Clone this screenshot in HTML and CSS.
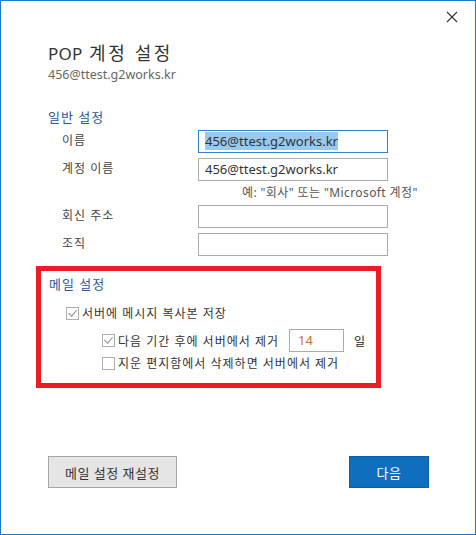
FILE: index.html
```
<!DOCTYPE html>
<html lang="ko">
<head>
    <meta charset="UTF-8">
    <meta name="viewport" content="width=device-width, initial-scale=1.0">
    <title>POP 계정 설정</title>
    <link rel="stylesheet" href="styles.css">
</head>
<body>

    <div class="window">
        <div class="titlebar">
            <span class="close">
                <svg width="12" height="12" viewBox="0 0 12 12"><path d="M1 1L11 11M11 1L1 11" stroke="#333" stroke-width="1.1" fill="none"/></svg>
            </span>
        </div>

        <div class="content">
            <h1>POP <span class="title-ko">계정 설정</span></h1>
            <p class="account">456@ttest.g2works.kr</p>

            <h2>일반 설정</h2>
            <div class="form">
                <div class="row">
                    <label>이름</label>
                    <div class="field focused"><span class="selected">456@ttest.g2works.kr</span></div>
                </div>
                <div class="row">
                    <label>계정 이름</label>
                    <div class="field">456@ttest.g2works.kr</div>
                </div>
                <p class="hint">예: "회사" 또는 "Microsoft 계정"</p>
                <div class="row">
                    <label>회신 주소</label>
                    <div class="field"></div>
                </div>
                <div class="row">
                    <label>조직</label>
                    <div class="field"></div>
                </div>
            </div>
        </div>

        <!-- 메일 설정 (빨간 테두리 강조) -->
        <div class="mail-box">
            <h2>메일 설정</h2>
            <div class="check level1">
                <span class="box checked"></span>
                <span>서버에 메시지 복사본 저장</span>
            </div>
            <div class="check level2 days-row">
                <span class="box checked"></span>
                <span>다음 기간 후에 서버에서 제거</span>
                <div class="days">14</div>
                <span class="unit">일</span>
            </div>
            <div class="check level2">
                <span class="box"></span>
                <span>지운 편지함에서 삭제하면 서버에서 제거</span>
            </div>
        </div>

        <div class="buttons">
            <button class="btn">메일 설정 재설정</button>
            <button class="btn primary">다음</button>
        </div>
    </div>

</body>
</html>
```

FILE: styles.css
```
body {
    margin: 0;
    padding: 0;
    background: #fff;
    font-family: "Noto Sans", "Noto Sans CJK KR", sans-serif;
    font-size: 12px;
    color: #333;
    letter-spacing: 1px;
}
.window {
    width: 476px;
    height: 535px;
    box-sizing: border-box;
    border: 1px solid #1979ca;
    background: #fff;
}
.titlebar {
    height: 32px;
    display: flex;
    justify-content: flex-end;
    align-items: center;
    padding-right: 17px;
}
.close {
    width: 12px;
    height: 12px;
    display: flex;
}
.content {
    padding-left: 47px;
}
h1 {
    margin: 8px 0 0;
    font-size: 17px;
    font-weight: normal;
    line-height: 24px;
    color: #333;
    letter-spacing: 0.2px;
}
.title-ko {
    font-size: 18px;
    letter-spacing: 2.6px;
    margin-left: 2px;
}
.account {
    margin: 0;
    font-size: 12.5px;
    line-height: 18px;
    color: #666;
    letter-spacing: 0;
}
h2 {
    margin: 24px 0 0;
    font-size: 13px;
    font-weight: normal;
    line-height: 18px;
    color: #2b5797;
}
.form {
    margin-top: 4px;
}
.row {
    display: flex;
    align-items: flex-start;
    margin-bottom: 5px;
}
.row label {
    width: 136px;
    padding-left: 14px;
    padding-top: 2px;
    line-height: 18px;
    color: #444;
}
.field {
    width: 190px;
    height: 23px;
    box-sizing: border-box;
    border: 1px solid #ababab;
    padding: 2px 6px;
    font-size: 13px;
    line-height: 17px;
    color: #333;
    letter-spacing: 0;
}
.field.focused {
    border-color: #2f83d1;
}
.selected {
    background: #99c9ef;
}
.hint {
    margin: -2px 0 3px 194px;
    line-height: 18px;
    color: #555;
    letter-spacing: 0.4px;
}
.mail-box {
    margin: 10px 0 0 35px;
    width: 345px;
    height: 122px;
    box-sizing: border-box;
    border: 5px solid #ed1c24;
    padding: 4px 0 0 8px;
}
.mail-box h2 {
    margin: 0;
}
.check {
    display: flex;
    align-items: center;
    gap: 3px;
    color: #333;
}
.level1 {
    margin: 11px 0 0 17px;
}
.level2 {
    margin: 0 0 0 53px;
}
.days-row {
    margin-top: 7px;
}
.level2 + .level2 {
    margin-top: 2px;
}
.box {
    width: 13px;
    height: 13px;
    box-sizing: border-box;
    border: 1px solid #adadad;
    background: #fff;
    position: relative;
}
.box.checked::after {
    content: "";
    position: absolute;
    left: 3px;
    top: 0px;
    width: 4px;
    height: 7px;
    border: solid #8a8a8a;
    border-width: 0 1px 1px 0;
    transform: rotate(40deg);
}
.days {
    width: 55px;
    height: 23px;
    box-sizing: border-box;
    border: 1px solid #ababab;
    margin-left: 7px;
    padding: 2px 8px;
    font-size: 13px;
    line-height: 17px;
    color: #c8742e;
    letter-spacing: 0;
}
.unit {
    margin-left: 7px;
    color: #222;
}
.buttons {
    display: flex;
    justify-content: space-between;
    margin: 68px 0 0 47px;
    width: 381px;
}
.btn {
    height: 32px;
    box-sizing: border-box;
    border: 1px solid #a5a5a5;
    background: #e5e5e5;
    font-family: "Noto Sans", "Noto Sans CJK KR", sans-serif;
    font-size: 13px;
    color: #333;
    letter-spacing: 0.5px;
    padding: 0;
    width: 129px;
}
.btn.primary {
    width: 80px;
    background: #106ebe;
    border-color: #0d5ea8;
    color: #fff;
}
```
